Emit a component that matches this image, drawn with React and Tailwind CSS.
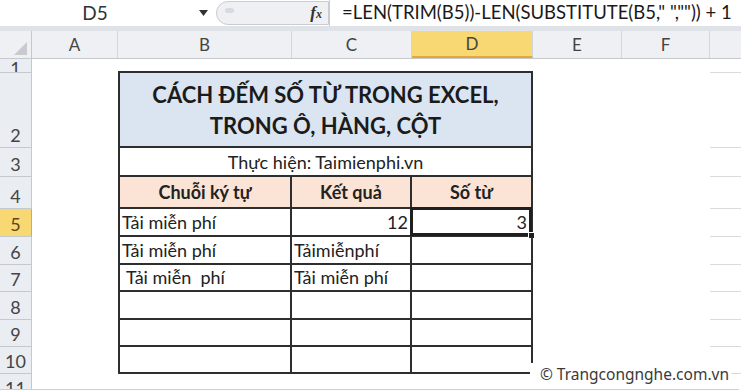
import React from 'react';

const FONT = { fontFamily: 'Lato, "Open Sans", "Noto Sans", sans-serif' };

// row heights measured from the screenshot (px, bottom line included)
const ROWS = [
  { n: 1, h: 'h-[14px]' },
  { n: 2, h: 'h-[75px]' },
  { n: 3, h: 'h-[29px]' },
  { n: 4, h: 'h-[32px]' },
  { n: 5, h: 'h-[28px]' },
  { n: 6, h: 'h-[28px]' },
  { n: 7, h: 'h-[27px]' },
  { n: 8, h: 'h-[28px]' },
  { n: 9, h: 'h-[27px]' },
  { n: 10, h: 'h-[27px]' },
  { n: 11, h: 'h-[27px]' },
];

const DATA = {
  5: ['Tải miễn phí', '12', '3'],
  6: ['Tải miễn phí', 'Tảimiễnphí', ''],
  7: ['\u00a0Tải miễn\u00a0 phí', 'Tải miễn phí', ''],
};

function FormulaBar() {
  return (
    <div className="flex h-[31px] items-center bg-white border-b-[5px] border-[#dfe2e6] overflow-hidden">
      <div className="w-[190px] shrink-0 text-center text-[19px] text-[#333]">D5</div>
      <div className="w-[26px] shrink-0 flex justify-center">
        <svg width="9" height="6" viewBox="0 0 9 6">
          <path d="M0 0 L9 0 L4.5 6 Z" fill="#333" />
        </svg>
      </div>
      <div className="relative shrink-0 h-[24px] w-[113px] rounded-l-full border border-[#c9ccd1] bg-[#eef0f3] flex items-center justify-end pr-[6px]">
        <span className="absolute left-[8px] top-[6px] h-[5px] w-[9px] rounded-full bg-[#d7dade]" />
        <span className="text-[17px] italic font-bold text-[#333]" style={{ fontFamily: '"Liberation Serif", serif' }}>
          f<span className="text-[12px]">x</span>
        </span>
      </div>
      <div className="h-full w-px shrink-0 bg-[#c9ccd1]" />
      <div className="pl-[12px] text-[18.5px] text-[#1a1a1a] whitespace-nowrap">
        =LEN(TRIM(B5))-LEN(SUBSTITUTE(B5," ","")) + 1
      </div>
    </div>
  );
}

function ColumnHeaders() {
  const cols = [
    ['A', 'w-[86px]'],
    ['B', 'w-[174px]'],
    ['C', 'w-[120px]'],
    ['D', 'w-[121px]'],
    ['E', 'w-[89px]'],
    ['F', 'w-[88px]'],
  ];
  return (
    <div className="flex h-[28px] bg-[#eef0f3] border-b border-[#c5c9ce] text-[17px] text-[#444]">
      <div className="relative w-[32px] shrink-0 border-r border-[#c5c9ce]">
        <svg className="absolute right-[4px] bottom-[3px]" width="13" height="13" viewBox="0 0 13 13">
          <path d="M13 0 L13 13 L0 13 Z" fill="#c7cace" />
        </svg>
      </div>
      {cols.map(([c, w]) => (
        <div
          key={c}
          className={`${w} shrink-0 flex items-center justify-center border-r border-[#d3d6da] ${
            c === 'D' ? 'bg-[#f8d872] border-b-2 border-b-[#e2a93a]' : ''
          }`}
        >
          {c}
        </div>
      ))}
      <div className="flex-1" />
    </div>
  );
}

function RowHeader({ n, h }) {
  const active = n === 5;
  return (
    <div
      className={`${h} w-[32px] shrink-0 overflow-hidden flex items-end justify-center border-r border-b border-[#c5c9ce] text-[18px] leading-[22px] ${
        active ? 'bg-[#f8d872] text-[#5a4a1a] border-r-[#e2a93a]' : 'bg-[#eaedf1] text-[#444]'
      }`}
    >
      <span className={n === 1 ? 'mb-[-7px]' : 'mb-[1px]'}>{n}</span>
    </div>
  );
}

function TableCells({ n }) {
  const cell = 'shrink-0 border-r-2 border-b-2 border-[#2e2e2e] flex items-end text-[18px] text-[#222] leading-[22px] pb-[2px] whitespace-pre';
  if (n === 1) {
    return <div className="w-[415px] shrink-0 border-b-2 border-[#2e2e2e]" />;
  }
  if (n === 2) {
    return (
      <div className={`w-[415px] border-l-2 bg-[#dbe5f1] ${cell} !items-center justify-center !pb-0`}>
        <div className="text-center text-[22px] font-bold leading-[31px] text-[#1b1b1b]">
          CÁCH ĐẾM SỐ TỪ TRONG EXCEL,
          <br />
          TRONG Ô, HÀNG, CỘT
        </div>
      </div>
    );
  }
  if (n === 3) {
    return (
      <div className={`w-[415px] border-l-2 bg-white ${cell} justify-center`}>
        Thực hiện: Taimienphi.vn
      </div>
    );
  }
  if (n === 4) {
    return (
      <>
        <div className={`w-[174px] border-l-2 bg-[#fbe4d5] justify-center font-bold !pb-[4px] ${cell}`}>Chuỗi ký tự</div>
        <div className={`w-[120px] bg-[#fbe4d5] justify-center font-bold !pb-[4px] ${cell}`}>Kết quả</div>
        <div className={`w-[121px] bg-[#fbe4d5] justify-center font-bold !pb-[4px] ${cell}`}>Số từ</div>
      </>
    );
  }
  if (n === 11) {
    return <div className="w-[415px] shrink-0" />;
  }
  const [b, c, d] = DATA[n] || ['', '', ''];
  const numeric = /^\d+$/.test(c);
  return (
    <>
      <div className={`w-[174px] border-l-2 pl-[2px] ${cell}`}>{b}</div>
      <div className={`w-[120px] ${numeric ? 'justify-end pr-[2px]' : 'pl-[2px]'} ${cell}`}>{c}</div>
      <div className={`relative w-[121px] justify-end pr-[4px] ${cell}`}>
        {d}
        {n === 5 && (
          <>
            <span className="absolute -left-[2px] -top-[2px] -right-[1px] -bottom-[1px] border-[3px] border-[#1f1f1f]" />
            <span className="absolute -right-[4px] -bottom-[4px] h-[7px] w-[7px] bg-[#1f1f1f] border border-white" />
          </>
        )}
      </div>
    </>
  );
}

function SheetRow({ n, h }) {
  return (
    <div className={`flex ${h}`}>
      <RowHeader n={n} h={h} />
      <div className="w-[86px] shrink-0" />
      <TableCells n={n} />
      <div className="w-[177px] shrink-0" />
      <div className="flex-1 border-b border-[#dadada]" />
    </div>
  );
}

export default function App() {
  return (
    <div className="relative h-[392px] w-[741px] overflow-hidden bg-white" style={FONT}>
      <FormulaBar />
      <ColumnHeaders />
      <div className="flex flex-col">
        {ROWS.map((r) => (
          <SheetRow key={r.n} {...r} />
        ))}
      </div>
      {/* watermark */}
      <div className="absolute right-[10px] bottom-[6px] bg-white pl-[10px] pr-[2px] text-[15.5px] text-[#3a3a3a]" style={{ fontFamily: '"Noto Sans", "Open Sans", sans-serif' }}>
        © Trangcongnghe.com.vn
      </div>
      <div className="absolute left-0 right-[2px] bottom-0 h-[3px] rounded-br-[6px] border-t border-[#cfcfcf] bg-white" />
    </div>
  );
}
